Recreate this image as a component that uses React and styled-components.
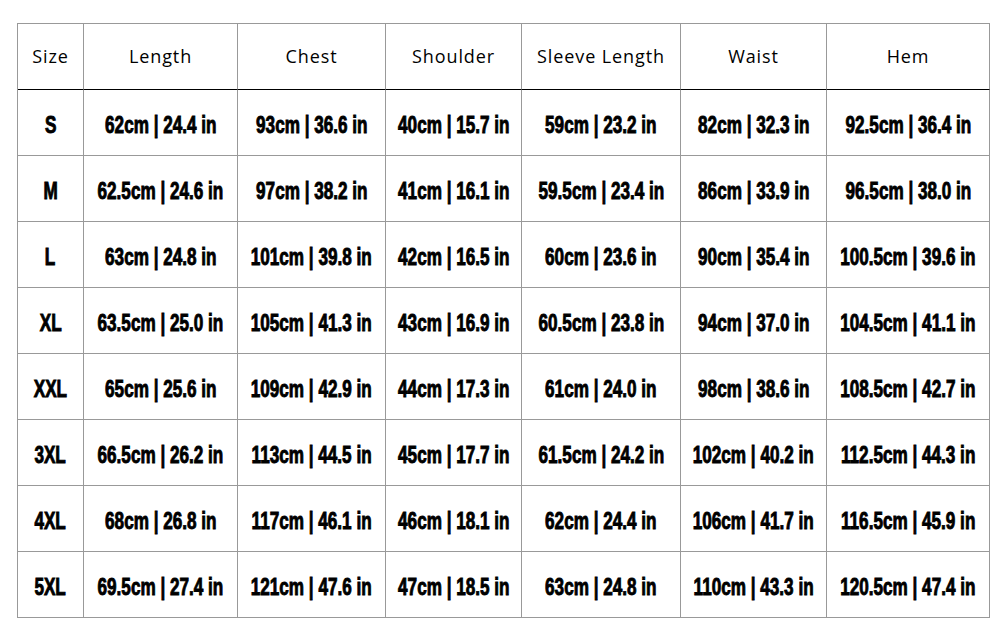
import React from 'react';
import styled, { createGlobalStyle } from 'styled-components';

const GlobalStyle = createGlobalStyle`
  html, body {
    margin: 0;
    padding: 0;
    background: #ffffff;
  }
`;

const Page = styled.div`
  padding: 23px 17px;
`;

const Grid = styled.div`
  display: grid;
  grid-template-columns: 66px 154px 148px 136px 159px 146px 163px;
  grid-auto-rows: 66px;
  width: max-content;
  border-left: 1px solid #999;
  border-top: 1px solid #999;
`;

const Cell = styled.div`
  box-sizing: border-box;
  display: flex;
  align-items: center;
  justify-content: center;
  border-right: 1px solid #999;
  border-bottom: 1px solid ${p => (p.$head ? '#000' : '#999')};
  color: #000;
  white-space: nowrap;
`;

const HeadCell = styled(Cell)`
  font-family: 'Open Sans', 'DejaVu Sans', sans-serif;
  font-size: 18px;
  letter-spacing: 0.9px;
  color: #000;
  padding-bottom: 1px;
`;

const BodyCell = styled(Cell)`
  font-family: 'Liberation Sans', Arial, sans-serif;
  font-weight: 700;
  font-size: 23px;
  padding-top: 5px;
`;

// Impact-like look: bold sans squeezed horizontally and thickened
const Squeeze = styled.span`
  display: inline-block;
  transform: scaleX(0.745);
  -webkit-text-stroke: 0.9px #000;
  letter-spacing: 0;
`;

const headers = ['Size', 'Length', 'Chest', 'Shoulder', 'Sleeve Length', 'Waist', 'Hem'];

const rows = [
  ['S', '62cm | 24.4 in', '93cm | 36.6 in', '40cm | 15.7 in', '59cm | 23.2 in', '82cm | 32.3 in', '92.5cm | 36.4 in'],
  ['M', '62.5cm | 24.6 in', '97cm | 38.2 in', '41cm | 16.1 in', '59.5cm | 23.4 in', '86cm | 33.9 in', '96.5cm | 38.0 in'],
  ['L', '63cm | 24.8 in', '101cm | 39.8 in', '42cm | 16.5 in', '60cm | 23.6 in', '90cm | 35.4 in', '100.5cm | 39.6 in'],
  ['XL', '63.5cm | 25.0 in', '105cm | 41.3 in', '43cm | 16.9 in', '60.5cm | 23.8 in', '94cm | 37.0 in', '104.5cm | 41.1 in'],
  ['XXL', '65cm | 25.6 in', '109cm | 42.9 in', '44cm | 17.3 in', '61cm | 24.0 in', '98cm | 38.6 in', '108.5cm | 42.7 in'],
  ['3XL', '66.5cm | 26.2 in', '113cm | 44.5 in', '45cm | 17.7 in', '61.5cm | 24.2 in', '102cm | 40.2 in', '112.5cm | 44.3 in'],
  ['4XL', '68cm | 26.8 in', '117cm | 46.1 in', '46cm | 18.1 in', '62cm | 24.4 in', '106cm | 41.7 in', '116.5cm | 45.9 in'],
  ['5XL', '69.5cm | 27.4 in', '121cm | 47.6 in', '47cm | 18.5 in', '63cm | 24.8 in', '110cm | 43.3 in', '120.5cm | 47.4 in'],
];

const App = () => (
  <Page>
    <GlobalStyle />
    <Grid>
      {headers.map(h => (
        <HeadCell key={h} $head>
          {h}
        </HeadCell>
      ))}
      {rows.map(row =>
        row.map((v, i) => (
          <BodyCell key={row[0] + i}>
            <Squeeze>{v}</Squeeze>
          </BodyCell>
        ))
      )}
    </Grid>
  </Page>
);

export default App;
